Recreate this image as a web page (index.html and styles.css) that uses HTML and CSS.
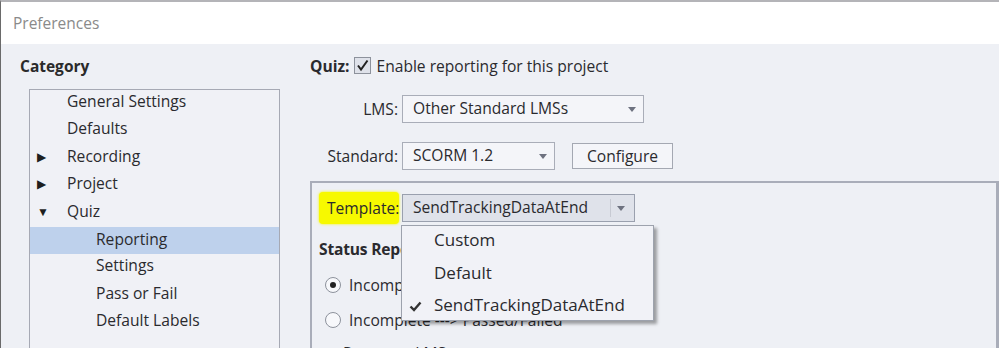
FILE: index.html
```html
<!DOCTYPE html>
<html lang="en">
<head>
    <meta charset="UTF-8">
    <title>Preferences</title>
    <link rel="stylesheet" href="styles.css">
</head>
<body>
<div class="window">
    <div class="titlebar">Preferences</div>
    <div class="content">
        <!-- Левая колонка: категории -->
        <div class="sidebar">
            <h2 class="category-title">Category</h2>
            <ul class="tree">
                <li class="tree-item">General Settings</li>
                <li class="tree-item">Defaults</li>
                <li class="tree-item"><span class="arrow">&#9654;</span>Recording</li>
                <li class="tree-item"><span class="arrow">&#9654;</span>Project</li>
                <li class="tree-item"><span class="arrow">&#9660;</span>Quiz</li>
                <li class="tree-item child selected">Reporting</li>
                <li class="tree-item child">Settings</li>
                <li class="tree-item child">Pass or Fail</li>
                <li class="tree-item child">Default Labels</li>
            </ul>
        </div>

        <!-- Правая колонка: настройки отчётов -->
        <div class="main">
            <div class="quiz-row">
                <span class="bold">Quiz:</span>
                <span class="checkbox">
                    <svg width="15" height="15" viewBox="0 0 15 15"><path d="M3 7.5 L6 11.5 L12.5 2.5" fill="none" stroke="#222" stroke-width="2"/></svg>
                </span>
                <span>Enable reporting for this project</span>
            </div>
            <div class="form-row">
                <span class="label">LMS:</span>
                <div class="select lms">Other Standard LMSs<span class="caret"></span></div>
            </div>
            <div class="form-row">
                <span class="label">Standard:</span>
                <div class="select standard">SCORM 1.2<span class="caret"></span></div>
                <button class="btn">Configure</button>
            </div>

            <div class="group">
                <div class="template-row">
                    <span class="highlight">Template:</span>
                    <div class="select template">SendTrackingDataAtEnd<span class="sep"></span><span class="caret"></span></div>
                    <ul class="dropdown">
                        <li>Custom</li>
                        <li>Default</li>
                        <li class="checked"><svg class="check" width="13" height="11" viewBox="0 0 13 11"><path d="M1.5 5.5 L5 9 L11.5 1.5" fill="none" stroke="#333" stroke-width="2.4"/></svg>SendTrackingDataAtEnd</li>
                    </ul>
                </div>
                <div class="bold status">Status Reporting</div>
                <div class="radio-row"><span class="radio on"></span>Incomplete ---&gt; Complete</div>
                <div class="radio-row"><span class="radio"></span>Incomplete ---&gt; Passed/Failed</div>
                <div class="cut">Report to LMS as</div>
            </div>
        </div>
    </div>
</div>
</body>
</html>
```

FILE: styles.css
```css
/* Общие стили */
body { margin: 0; padding: 0; font-family: "Open Sans", "Noto Sans", sans-serif; font-size: 15.6px; color: #2a2a2e; background: #fff; }

.window {
    height: 348px;
    overflow: hidden;
    border-top: 2px solid #b4b4b8;
    border-left: 1px solid #6a6a6a;
    box-sizing: border-box;
}

.titlebar {
    background: #fff;
    height: 42px;
    line-height: 42px;
    padding-left: 12px;
    color: #8a8a8a;
    font-size: 15.5px;
}

.content {
    background: #eef0f5;
    display: flex;
    height: 304px;
}

/* Категории */
.sidebar {
    width: 280px;
    padding: 11px 0 0 19px;
}

.category-title {
    margin: 0 0 10px 0;
    height: 24px;
    line-height: 23px;
    font-size: 15.5px;
    font-weight: bold;
    color: #2a2a2a;
}

.tree {
    list-style: none;
    margin: 0 0 0 9px;
    padding: 0;
    width: 249px;
    height: 300px;
    border: 1px solid #a6a9b4;
    background: #f0f1f6;
}

.tree-item {
    height: 27.4px;
    line-height: 22px;
    padding-left: 37px;
    position: relative;
}

.tree-item.child { padding-left: 66px; }

.tree-item.selected { background: #bed1ec; line-height: 24px; }

.arrow {
    position: absolute;
    left: 7px;
    top: 1px;
    font-size: 12px;
    color: #1e1e1e;
}

/* Правая часть */
.main {
    flex: 1;
    padding: 9px 0 0 10px;
}

.bold { font-weight: bold; }

.quiz-row {
    display: flex;
    align-items: center;
    gap: 5px;
    height: 25px;
}

.checkbox {
    width: 15px;
    height: 15px;
    border: 1px solid #8d929c;
    background: #dfe2ea;
    display: inline-flex;
}

.form-row {
    display: flex;
    align-items: center;
    margin-top: 17px;
    height: 28px;
}

.form-row + .form-row { margin-top: 19px; }

.label {
    width: 88px;
    text-align: right;
    padding-right: 4px;
}

.select {
    position: relative;
    height: 28px;
    line-height: 25px;
    border: 1px solid #a9adb8;
    background: #f4f5f9;
    padding-left: 10px;
    box-sizing: border-box;
}

.select.lms { width: 242px; }
.select.standard { width: 153px; }

.caret {
    position: absolute;
    right: 7px;
    top: 11px;
    border-left: 4px solid transparent;
    border-right: 4px solid transparent;
    border-top: 5px solid #6e7280;
}

.btn {
    margin-left: 17px;
    height: 26px;
    width: 101px;
    border: 1px solid #a4a8b2;
    background: #f4f5f9;
    font-family: inherit;
    font-size: 15.6px;
    line-height: 22px;
    color: #2a2a2e;
    padding: 0;
}

/* Группа шаблона */
.group {
    margin-top: 11px;
    border: 2px solid #a9adb9;
    border-right-width: 3px;
    border-bottom: none;
    height: 200px;
    padding: 9px 0 0 7px;
}

.template-row {
    position: relative;
    display: flex;
    align-items: center;
}

.highlight {
    width: 72px;
    background: #f7f900;
    padding: 5px 0 5px 8px;
    border-radius: 4px;
    box-shadow: 0 0 3px #f7f900;
    white-space: nowrap;
    margin-right: 3px;
}

.select.template {
    width: 233px;
    background: #dfe2ea;
    border-color: #9aa0ae;
}

.sep {
    position: absolute;
    right: 23px;
    top: 4px;
    bottom: 4px;
    border-left: 1px solid #c7cad3;
}

.select.template .caret { right: 9px; }

.dropdown {
    position: absolute;
    left: 82px;
    top: 33px;
    width: 251px;
    margin: 0;
    padding: 0;
    list-style: none;
    background: #f1f2f7;
    border: 1px solid #9da2ad;
    box-shadow: 3px 3px 3px rgba(0, 0, 0, 0.35);
    font-size: 17px;
    z-index: 2;
}

.dropdown li {
    position: relative;
    height: 31.3px;
    line-height: 28px;
    padding-left: 32px;
}

.dropdown li + li { line-height: 32px; }

.check {
    position: absolute;
    left: 7px;
    top: 12px;
}

.status {
    margin-top: 14px;
    font-size: 15.6px;
    letter-spacing: -0.2px;
}

.radio-row {
    display: flex;
    align-items: center;
    gap: 8px;
    margin-top: 14px;
    padding-left: 6px;
}

.radio-row + .radio-row { margin-top: 13px; }

.radio {
    width: 14px;
    height: 14px;
    border: 1px solid #8d929c;
    border-radius: 50%;
    background: #f7f8fb;
    position: relative;
}

.radio.on::after {
    content: "";
    position: absolute;
    left: 4px;
    top: 4px;
    width: 6px;
    height: 6px;
    border-radius: 50%;
    background: #222;
}

.cut { margin-top: 11px; padding-left: 24px; }
```
